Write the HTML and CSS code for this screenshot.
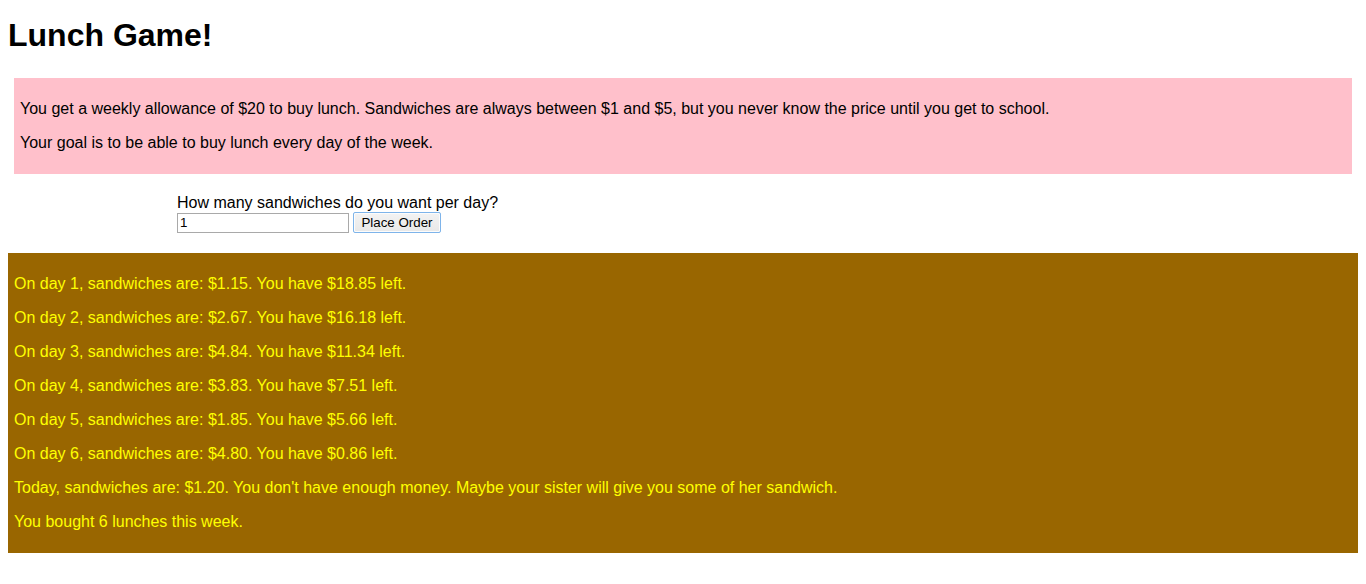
FILE: index.html
```html
<!DOCTYPE html>
<html>
<head>
<meta charset="utf-8">
<title>Lunch Game!</title>
<link rel="stylesheet" href="styles.css">
</head>
<body>
<h1 class="title">Lunch Game!</h1>
<div class="intro">
  <p>You get a weekly allowance of $20 to buy lunch. Sandwiches are always between $1 and $5, but you never know the price until you get to school.</p>
  <p>Your goal is to be able to buy lunch every day of the week.</p>
</div>
<form class="order">
  <label class="order-label" for="qty">How many sandwiches do you want per day?</label>
  <div class="order-row">
    <input class="order-input" id="qty" type="text" value="1">
    <button class="order-button" type="button">Place Order</button>
  </div>
</form>
<div class="results">
  <p>On day 1, sandwiches are: $1.15. You have $18.85 left.</p>
  <p>On day 2, sandwiches are: $2.67. You have $16.18 left.</p>
  <p>On day 3, sandwiches are: $4.84. You have $11.34 left.</p>
  <p>On day 4, sandwiches are: $3.83. You have $7.51 left.</p>
  <p>On day 5, sandwiches are: $1.85. You have $5.66 left.</p>
  <p>On day 6, sandwiches are: $4.80. You have $0.86 left.</p>
  <p>Today, sandwiches are: $1.20. You don't have enough money. Maybe your sister will give you some of her sandwich.</p>
  <p>You bought 6 lunches this week.</p>
</div>
</body>
</html>
```
FILE: styles.css
```css
body {
  margin: 0 8px 8px;
  font-family: "Liberation Sans", Arial, sans-serif;
  font-size: 16px;
  line-height: 18px;
  color: #000;
  background: #fff;
}

.title {
  font-size: 32px;
  line-height: 37px;
  font-weight: bold;
  margin: 17px 0 24px;
}

.intro {
  background: #ffc0cb;
  margin: 0 6px;
  padding: 6px;
}

.intro p,
.results p {
  margin: 16px 0;
}

.order {
  margin: 20px 0 0;
  padding-left: 169px;
}

.order-label {
  display: block;
}

.order-row {
  display: flex;
  align-items: center;
  gap: 4px;
  height: 21px;
}

.order-input {
  box-sizing: border-box;
  width: 172px;
  height: 20px;
  margin: 0;
  padding: 1px 2px;
  border: 1px solid #a9a9a9;
  font-family: "Liberation Sans", Arial, sans-serif;
  font-size: 13.33px;
  color: #000;
  background: #fff;
}

.order-button {
  box-sizing: border-box;
  width: 88px;
  height: 21px;
  margin: 0;
  padding: 0 6px;
  border: 1px solid #7eb4ea;
  border-radius: 2px;
  box-shadow: inset 0 0 0 1px #fcfcfc;
  background: linear-gradient(#f3f3f3, #e8e8e8);
  font-family: "Liberation Sans", Arial, sans-serif;
  font-size: 13.33px;
  color: #000;
}

.results {
  background: #996600;
  color: #ffff00;
  margin-top: 20px;
  padding: 6px;
}
```
